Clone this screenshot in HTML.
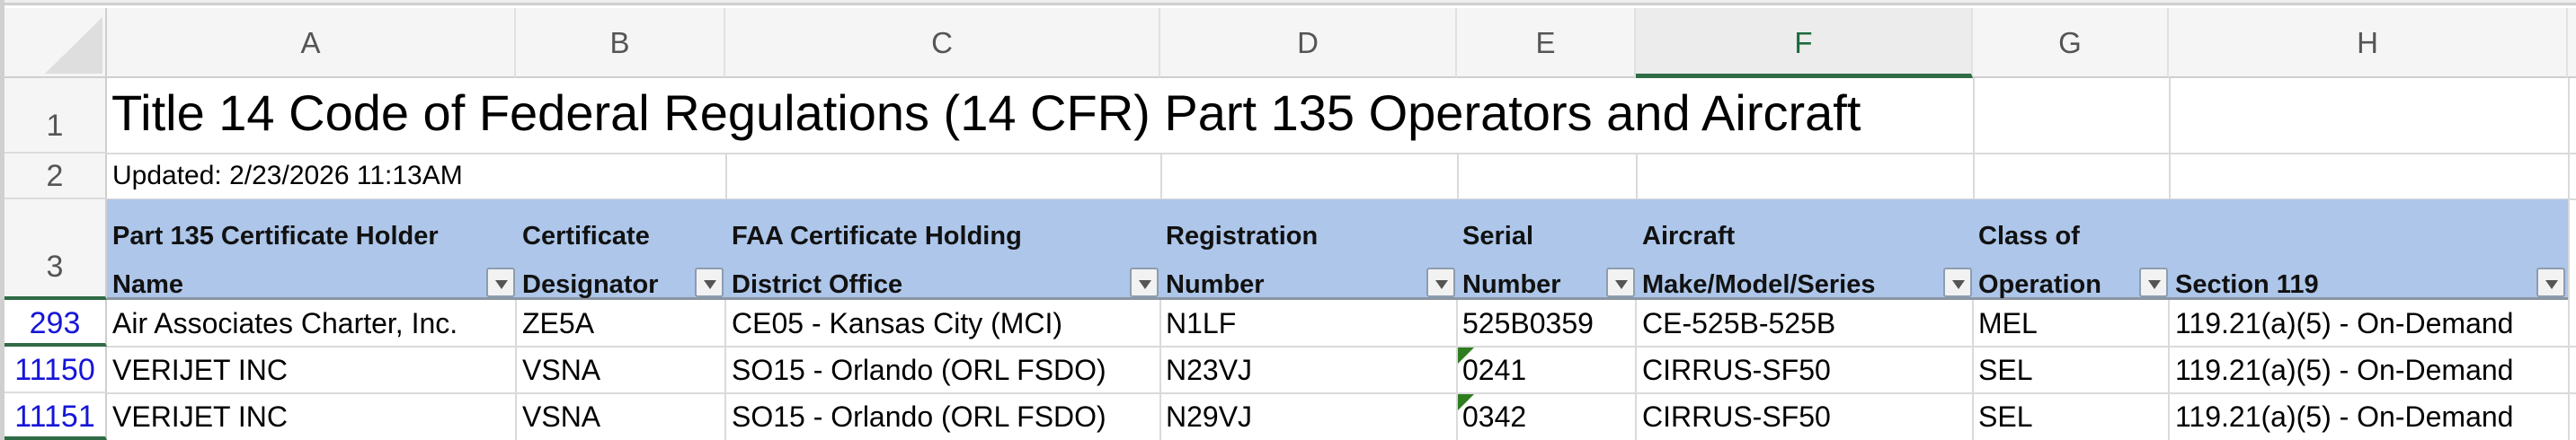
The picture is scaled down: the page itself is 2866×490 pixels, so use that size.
<!DOCTYPE html>
<html><head><meta charset="utf-8"><style>
body{margin:0;width:2866px;height:490px;background:#fff;overflow:hidden;position:relative;font-family:"Liberation Sans",sans-serif;}
div{position:absolute;box-sizing:border-box;}
.t{white-space:nowrap;}
.ch{top:9px;height:78px;background:#f5f5f5;border-right:2px solid #e1e1e1;border-bottom:2px solid #cfcfcf;color:#555;font-size:33px;text-align:center;line-height:78px;}
.rh{left:5px;width:114px;background:#f5f5f5;border-bottom:2px solid #dcdcdc;border-right:2px solid #cfcfcf;color:#555;font-size:34px;text-align:center;}
.vl{width:2px;background:#dadada;}
.hl{height:2px;background:#dadada;}
.c{font-size:32px;color:#000;}
.h{font-size:29px;font-weight:bold;color:#111;}
.fb{width:32px;height:33px;background:#f2f2f2;border:2px solid #8d9db0;border-radius:3px;}
.fb:after{content:"";position:absolute;left:8px;top:12px;border-left:7px solid transparent;border-right:7px solid transparent;border-top:10px solid #555;}
.tri{width:0;height:0;border-top:18px solid #2e7d1f;border-right:18px solid transparent;}
</style></head><body>
<div style="left:0;top:0;width:2866px;height:3px;background:#eee"></div>
<div style="left:0;top:3px;width:2866px;height:3px;background:#cfcfcf"></div>
<div style="left:0;top:0;width:5px;height:490px;background:#d0d0d0"></div>
<div style="left:5px;top:9px;width:114px;height:78px;background:#f5f5f5;border-right:2px solid #cfcfcf;border-bottom:2px solid #cfcfcf"></div>
<svg style="position:absolute;left:0;top:0" width="120" height="90"><polygon points="50,82 114,19 114,82" fill="#dedede"/></svg>
<div class="ch" style="left:119px;width:455px">A</div>
<div class="ch" style="left:574px;width:233px">B</div>
<div class="ch" style="left:807px;width:484px">C</div>
<div class="ch" style="left:1291px;width:330px">D</div>
<div class="ch" style="left:1621px;width:199px">E</div>
<div class="ch" style="left:1820px;width:375px;color:#1e6b3c;background:#ececec;border-bottom:5px solid #2f6b45">F</div>
<div class="ch" style="left:2195px;width:218px">G</div>
<div class="ch" style="left:2413px;width:444px">H</div>
<div class="ch" style="left:2857px;width:9px;border-right:none"></div>
<div class="rh" style="top:87px;height:84px;padding-top:22px;line-height:62px">1</div>
<div class="rh" style="top:171px;height:51px;line-height:51px">2</div>
<div class="rh" style="top:222px;height:112px;line-height:150px;border-bottom:4px solid #2f6b45">3</div>
<div class="rh" style="top:334px;height:52px;line-height:52px;color:#1515d8;background:#fff;border-bottom:4px solid #2f6b45">293</div>
<div class="rh" style="top:386px;height:52px;line-height:52px;color:#1515d8;background:#fff">11150</div>
<div class="rh" style="top:438px;height:52px;line-height:52px;color:#1515d8;background:#fff;border-bottom:4px solid #2f6b45">11151</div>
<div class="hl" style="left:119px;top:170px;width:2747px"></div>
<div class="hl" style="left:119px;top:221px;width:2747px"></div>
<div class="hl" style="left:119px;top:385px;width:2747px"></div>
<div class="hl" style="left:119px;top:437px;width:2747px"></div>
<div class="vl" style="left:2195px;top:87px;height:84px"></div>
<div class="vl" style="left:2413px;top:87px;height:84px"></div>
<div class="vl" style="left:2857px;top:87px;height:403px"></div>
<div class="vl" style="left:807px;top:171px;height:51px"></div>
<div class="vl" style="left:1291px;top:171px;height:51px"></div>
<div class="vl" style="left:1621px;top:171px;height:51px"></div>
<div class="vl" style="left:1820px;top:171px;height:51px"></div>
<div class="vl" style="left:2195px;top:171px;height:51px"></div>
<div class="vl" style="left:2413px;top:171px;height:51px"></div>
<div style="left:119px;top:222px;width:2738px;height:112px;background:#adc6e9;border-bottom:3px solid #8b96a3"></div>
<div class="vl" style="left:573px;top:334px;height:156px"></div>
<div class="vl" style="left:806px;top:334px;height:156px"></div>
<div class="vl" style="left:1290px;top:334px;height:156px"></div>
<div class="vl" style="left:1620px;top:334px;height:156px"></div>
<div class="vl" style="left:1819px;top:334px;height:156px"></div>
<div class="vl" style="left:2194px;top:334px;height:156px"></div>
<div class="vl" style="left:2412px;top:334px;height:156px"></div>
<div class="t" style="left:124px;top:90px;font-size:56px;line-height:72px">Title 14 Code of Federal Regulations (14 CFR) Part 135 Operators and Aircraft</div>
<div class="t" style="left:125px;top:175px;line-height:42px;font-size:30px">Updated: 2/23/2026 11:13AM</div>
<div class="t h" style="left:125px;top:236px;line-height:54px">Part 135 Certificate Holder<br>Name</div>
<div class="t h" style="left:581px;top:236px;line-height:54px">Certificate<br>Designator</div>
<div class="t h" style="left:814px;top:236px;line-height:54px">FAA Certificate Holding<br>District Office</div>
<div class="t h" style="left:1297px;top:236px;line-height:54px">Registration<br>Number</div>
<div class="t h" style="left:1627px;top:236px;line-height:54px">Serial<br>Number</div>
<div class="t h" style="left:1827px;top:236px;line-height:54px">Aircraft<br>Make/Model/Series</div>
<div class="t h" style="left:2201px;top:236px;line-height:54px">Class of<br>Operation</div>
<div class="t h" style="left:2420px;top:290px;line-height:54px">Section 119</div>
<div class="fb" style="left:541px;top:298px"></div>
<div class="fb" style="left:773px;top:298px"></div>
<div class="fb" style="left:1257px;top:298px"></div>
<div class="fb" style="left:1587px;top:298px"></div>
<div class="fb" style="left:1787px;top:298px"></div>
<div class="fb" style="left:2162px;top:298px"></div>
<div class="fb" style="left:2380px;top:298px"></div>
<div class="fb" style="left:2822px;top:298px"></div>
<div class="t c" style="left:125px;top:339px;line-height:42px">Air Associates Charter, Inc.</div>
<div class="t c" style="left:581px;top:339px;line-height:42px">ZE5A</div>
<div class="t c" style="left:814px;top:339px;line-height:42px">CE05 - Kansas City (MCI)</div>
<div class="t c" style="left:1297px;top:339px;line-height:42px">N1LF</div>
<div class="t c" style="left:1627px;top:339px;line-height:42px">525B0359</div>
<div class="t c" style="left:1827px;top:339px;line-height:42px">CE-525B-525B</div>
<div class="t c" style="left:2201px;top:339px;line-height:42px">MEL</div>
<div class="t c" style="left:2420px;top:339px;line-height:42px">119.21(a)(5) - On-Demand</div>
<div class="t c" style="left:125px;top:391px;line-height:42px">VERIJET INC</div>
<div class="t c" style="left:581px;top:391px;line-height:42px">VSNA</div>
<div class="t c" style="left:814px;top:391px;line-height:42px">SO15 - Orlando (ORL FSDO)</div>
<div class="t c" style="left:1297px;top:391px;line-height:42px">N23VJ</div>
<div class="tri" style="left:1622px;top:387px"></div>
<div class="t c" style="left:1627px;top:391px;line-height:42px">0241</div>
<div class="t c" style="left:1827px;top:391px;line-height:42px">CIRRUS-SF50</div>
<div class="t c" style="left:2201px;top:391px;line-height:42px">SEL</div>
<div class="t c" style="left:2420px;top:391px;line-height:42px">119.21(a)(5) - On-Demand</div>
<div class="t c" style="left:125px;top:443px;line-height:42px">VERIJET INC</div>
<div class="t c" style="left:581px;top:443px;line-height:42px">VSNA</div>
<div class="t c" style="left:814px;top:443px;line-height:42px">SO15 - Orlando (ORL FSDO)</div>
<div class="t c" style="left:1297px;top:443px;line-height:42px">N29VJ</div>
<div class="tri" style="left:1622px;top:439px"></div>
<div class="t c" style="left:1627px;top:443px;line-height:42px">0342</div>
<div class="t c" style="left:1827px;top:443px;line-height:42px">CIRRUS-SF50</div>
<div class="t c" style="left:2201px;top:443px;line-height:42px">SEL</div>
<div class="t c" style="left:2420px;top:443px;line-height:42px">119.21(a)(5) - On-Demand</div>
</body></html>
